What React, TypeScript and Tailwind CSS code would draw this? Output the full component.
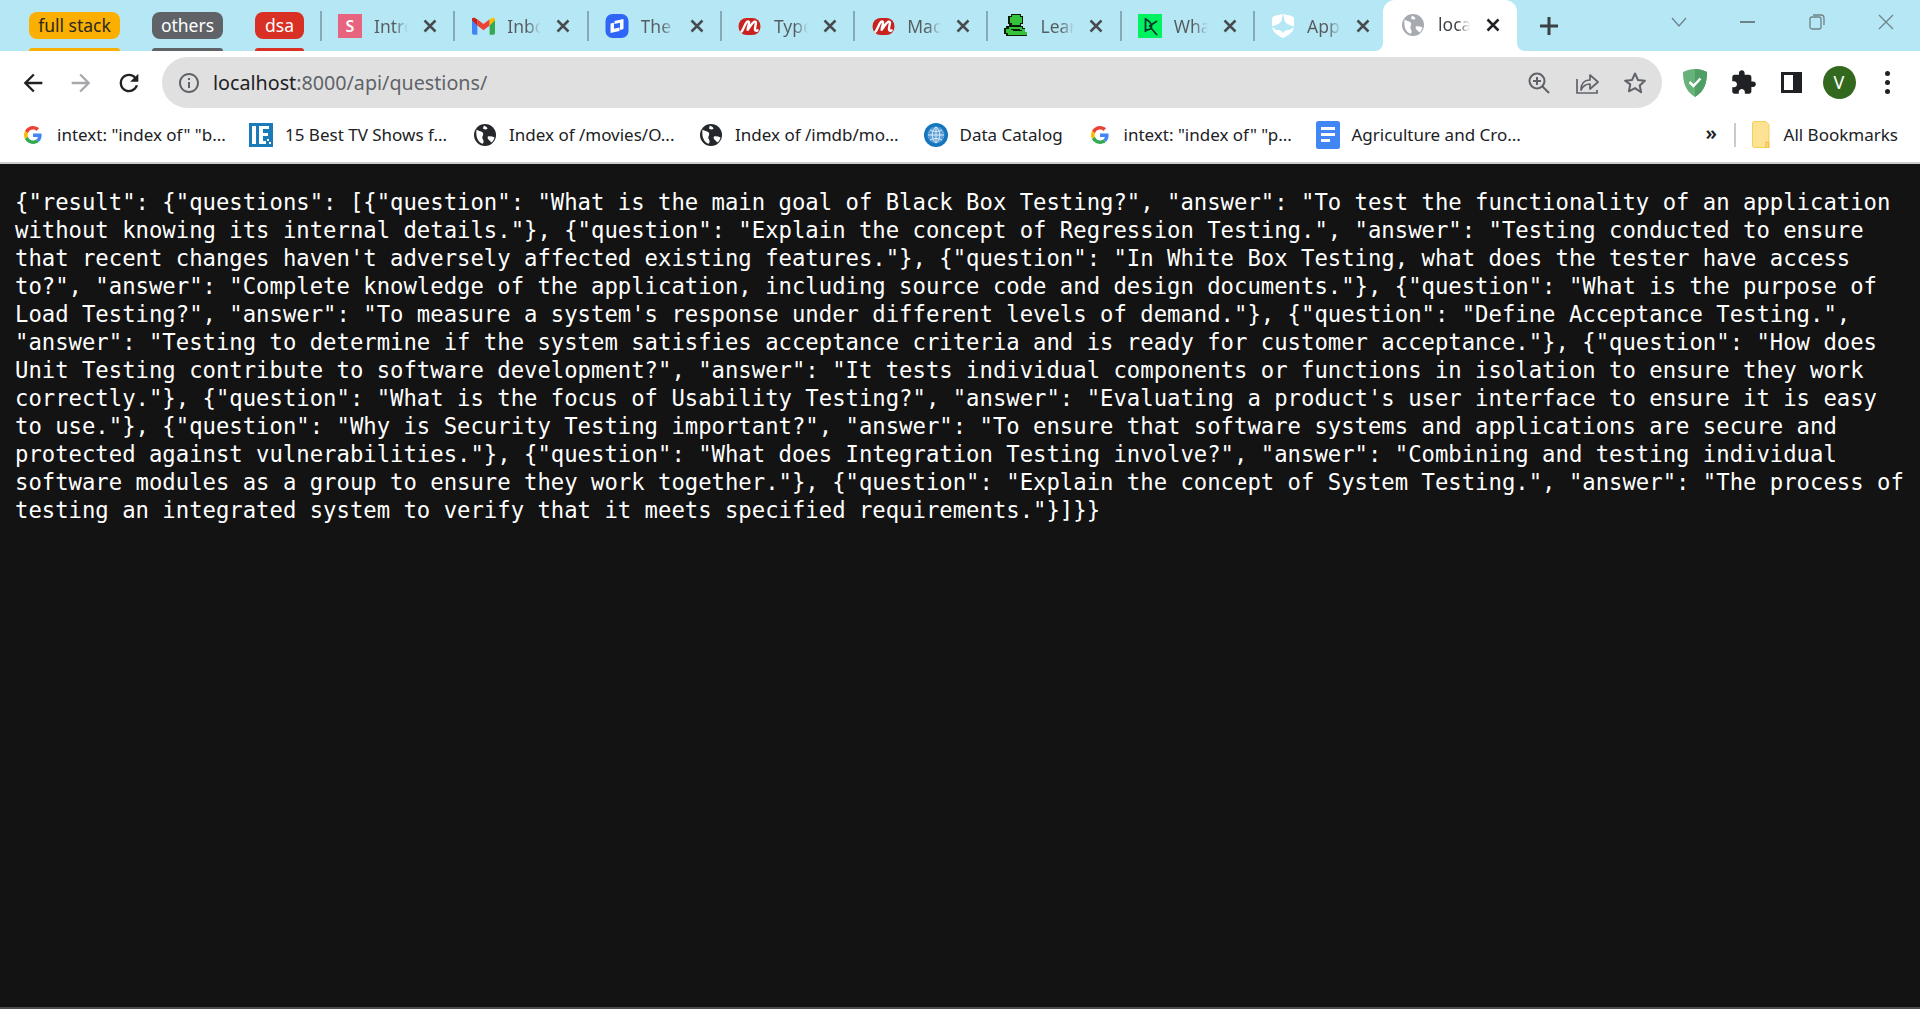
import React from 'react';

const UI_FONT = "font-['Noto_Sans',sans-serif]";

const GoogleIcon = () => (
  <svg viewBox="0 0 48 48" className="w-[18px] h-[18px]">
    <path fill="#EA4335" d="M24 9.5c3.54 0 6.71 1.22 9.21 3.6l6.85-6.85C35.9 2.38 30.47 0 24 0 14.62 0 6.51 5.38 2.56 13.22l7.98 6.19C12.43 13.72 17.74 9.5 24 9.5z" />
    <path fill="#4285F4" d="M46.98 24.55c0-1.57-.15-3.09-.38-4.55H24v9.02h12.94c-.58 2.96-2.26 5.48-4.78 7.18l7.73 6c4.51-4.18 7.09-10.36 7.09-17.65z" />
    <path fill="#FBBC05" d="M10.53 28.59c-.48-1.45-.76-2.99-.76-4.59s.27-3.14.76-4.59l-7.98-6.19C.92 16.46 0 20.12 0 24c0 3.88.92 7.54 2.56 10.78l7.97-6.19z" />
    <path fill="#34A853" d="M24 48c6.48 0 11.93-2.13 15.89-5.81l-7.73-6c-2.15 1.45-4.92 2.3-8.16 2.3-6.26 0-11.57-4.22-13.47-9.91l-7.98 6.19C6.51 42.62 14.62 48 24 48z" />
  </svg>
);

const GmailIcon = () => (
  <svg viewBox="0 0 24 18" className="w-[23px] h-[18px]">
    <path fill="#4285F4" d="M0 3v13.2C0 17.2.8 18 1.8 18h3.8V8.6L2.5 2 0 3z" />
    <path fill="#34A853" d="M18.4 18h3.8c1 0 1.8-.8 1.8-1.8V3l-2.500-1-3.100 6.600V18z" />
    <path fill="#EA4335" d="M5.600 8.600 2.900.7C1.600-.3 0 .6 0 2.200V3l5.600 5.600zM5.600 8.600 12 13.400l6.400-4.800V2L12 6.800 5.600 2v6.600z" />
    <path fill="#FBBC04" d="M18.400 2v6.600L24 3v-.8c0-1.600-1.600-2.500-2.900-1.500L18.400 2z" />
    <path fill="#C5221F" d="M0 3l5.600 5.600V2L2.900.7C1.600-.3 0 .6 0 2.200V3z" />
  </svg>
);

const BlueLogo = () => (
  <svg viewBox="0 0 24 24" className="w-[24px] h-[24px]">
    <rect x="0.500" y="0" width="23" height="24" rx="7" fill="#2f66f6" />
    <path fill="#fff" d="M9.500 7 18.500 5v10l-3.500 1V8.800l-5.500 1.200z" />
    <path fill="#fff" d="M5.500 9.500 9 8.700v6.100l5.500-1.200V17l-9 2z" />
  </svg>
);

const ScriptMIcon = () => (
  <svg viewBox="0 0 24 20" className="w-[23px] h-[19px]">
    <rect x="0.500" y="1" width="23" height="18" rx="8.500" fill="#c9221f" />
    <path fill="none" stroke="#fff" strokeWidth="2.500" strokeLinecap="round" strokeLinejoin="round" d="M3.500 15.500C6 13 7 7 9.500 5c1.500-1 2.300 0 2 1.800-.4 2.400-1.500 5-1.500 6.700 2.500-2.500 4-7 7-8.500 1.500-.5 2 .5 1.700 2-.4 2-1.200 4.500-.9 6.500.2 1 1.200 1.200 2.700.5" />
  </svg>
);

// little pixel art character, black outline with a green fill
const GreenGuy = () => (
  <svg viewBox="0 0 24 24" className="w-[24px] h-[24px]" shapeRendering="crispEdges">
    <path fill="#0b1a0b" d="M7 0h10v2h2v8h-2v2h2v2h2v4h2v4H2v-2H0v-6h2v-2h3v-2H4V2h3z" />
    <path fill="#33c23a" d="M8 1h8v2h2v6h-2v2H8V9H6V3h2z" />
    <path fill="#33c23a" d="M5 13h13v2h3v3h2v3H4v-2H2v-4h3z" />
    <path fill="#0b1a0b" d="M7 15h9v1h2v1H9v-1H7zM5 5h1v3H5zM18 5h1v3h-1z" />
  </svg>
);

const DkIcon = () => (
  <svg viewBox="0 0 24 24" className="w-[24px] h-[24px]">
    <rect width="24" height="24" fill="#00f260" />
    <path fill="none" stroke="#07362c" strokeWidth="1.800" d="M7.500 4v14M7.500 5c4 2 6 4.500 6 7.500 0 2.500-3 3.500-6 3.500M11 12.500 19 7M13 14l6 7" />
  </svg>
);

const ShieldIcon = () => (
  <svg viewBox="0 0 24 24" className="w-[24px] h-[24px]">
    <path fill="#fff" d="M12 0 3 2 1 4v8c0 5 5 9.500 11 12 6-2.500 11-7 11-12V4l-2-2z" />
    <path fill="#b5e8f4" d="M12-1l1.500 7.500C14.500 9 17 11 24 12.500l-5.500 3.500c-3 0-5 .5-6.500 3-1.500-2.500-3.500-3-6.500-3L0 12.500C7 11 9.500 9 10.500 6.500z" />
  </svg>
);

const GlobeIcon = ({ dark = true }: { dark?: boolean }) => (
  <svg viewBox="0 0 22 22" className="w-[22px] h-[22px]">
    <circle cx="11" cy="11" r="11" fill={dark ? '#24272b' : '#a6abb1'} />
    <path fill="#fff" d="M2.500 5.500C5 7.500 8 7 9 9c1 2.500-2 4 0 6.500.8 1 .8 3-.2 4.300C4.500 18.500 1.500 14 2.500 5.500z" />
    <path fill="#fff" d="M14 12.500c2-.5 4.500 0 6.500 1-.5 2-1.500 3.700-3 5-1.200-1-2.500-2.500-3.500-3.500-.5-.8-.5-1.800 0-2.500z" />
    <path fill="#fff" d="M10 1.500c1.500 1 3 1.500 3.500 3-1 1.500-3 1-4.500 0 .2-1 .5-2 1-3z" />
  </svg>
);

const IeIcon = () => (
  <svg viewBox="0 0 24 24" className="w-[24px] h-[24px]" shapeRendering="crispEdges">
    <rect width="24" height="24" fill="#1b7bb9" />
    <path fill="#fff" d="M3 3h4v18H3zM10 3h10v3h-6v4h5v3h-5v5h3v3h-7z" />
    <path fill="#fff" d="M18 16h2v2h-2zM20 19h2v2h-2z" />
  </svg>
);

const CatalogIcon = () => (
  <svg viewBox="0 0 24 24" className="w-[24px] h-[24px]">
    <circle cx="12" cy="12" r="12" fill="#1476bd" />
    <circle cx="12" cy="12" r="8.500" fill="#5b9fd4" />
    <path fill="none" stroke="#e8f2fa" strokeWidth="0.900" d="M12 4v16M4 12h16M6 7c4 2 8 2 12 0M6 17c4-2 8-2 12 0M12 4c-5 4-5 12 0 16M12 4c5 4 5 12 0 16" />
  </svg>
);

const DocIcon = () => (
  <svg viewBox="0 0 24 28" className="w-[24px] h-[28px]">
    <rect width="24" height="28" rx="2.500" fill="#4285f4" />
    <path fill="#fff" d="M5 6h14v3H5zM5 12h14v3H5zM5 18h9v3H5z" />
  </svg>
);

const FolderIcon = () => (
  <svg viewBox="0 0 18 28" className="w-[18px] h-[28px]">
    <path fill="#fde293" stroke="#f6cf5b" strokeWidth="1" d="M2 .5h12l3 3v23H2c-.8 0-1.500-.7-1.500-1.500V2C.5 1.200 1.200.5 2 .5z" />
    <path fill="none" stroke="#f2c14e" strokeWidth="1.500" d="M14 27v-5c0-1 2.500-1 2.500 0v5" />
  </svg>
);

const CloseIcon = ({ className }: { className: string }) => (
  <svg viewBox="0 0 14 14" className={`w-[14px] h-[14px] ${className}`}>
    <path d="M1.500 1.500 12.500 12.500M12.500 1.500 1.500 12.500" stroke="currentColor" strokeWidth="2.500" fill="none" />
  </svg>
);

const MaterialIcon = ({ d, className }: { d: string; className: string }) => (
  <svg viewBox="0 0 24 24" className={className} fill="currentColor">
    <path d={d} />
  </svg>
);

const tabGroups = [
  { label: 'full stack', pill: 'bg-[#fbaf00] text-[#2a2a20]', bar: 'bg-[#fbaf00]', width: 'w-[91px]' },
  { label: 'others', pill: 'bg-[#5f6368] text-white', bar: 'bg-[#5f6368]', width: 'w-[71px]' },
  { label: 'dsa', pill: 'bg-[#d93025] text-white', bar: 'bg-[#d93025]', width: 'w-[49px]' },
];

const tabs = [
  { title: 'Intro', icon: <div className="w-[24px] h-[24px] bg-[#e8637e] text-white text-[16px] font-semibold flex items-center justify-center">S</div> },
  { title: 'Inbox', icon: <GmailIcon /> },
  { title: 'The', icon: <BlueLogo /> },
  { title: 'Type', icon: <ScriptMIcon /> },
  { title: 'Mac', icon: <ScriptMIcon /> },
  { title: 'Learn', icon: <GreenGuy /> },
  { title: 'What', icon: <DkIcon /> },
  { title: 'App', icon: <ShieldIcon /> },
];

const bookmarks = [
  { label: 'intext: "index of" "b...', icon: <GoogleIcon />, width: 'w-[167px]' },
  { label: '15 Best TV Shows f...', icon: <IeIcon />, width: 'w-[163px]' },
  { label: 'Index of /movies/O...', icon: <GlobeIcon />, width: 'w-[165px]' },
  { label: 'Index of /imdb/mo...', icon: <GlobeIcon />, width: 'w-[163.500px]' },
  { label: 'Data Catalog', icon: <CatalogIcon />, width: 'w-[103px]' },
  { label: 'intext: "index of" "p...', icon: <GoogleIcon />, width: 'w-[167px]' },
  { label: 'Agriculture and Cro...', icon: <DocIcon />, width: 'w-[169px]' },
];

const RESPONSE = `{"result": {"questions": [{"question": "What is the main goal of Black Box Testing?", "answer": "To test the functionality of an application without knowing its internal details."}, {"question": "Explain the concept of Regression Testing.", "answer": "Testing conducted to ensure that recent changes haven't adversely affected existing features."}, {"question": "In White Box Testing, what does the tester have access to?", "answer": "Complete knowledge of the application, including source code and design documents."}, {"question": "What is the purpose of Load Testing?", "answer": "To measure a system's response under different levels of demand."}, {"question": "Define Acceptance Testing.", "answer": "Testing to determine if the system satisfies acceptance criteria and is ready for customer acceptance."}, {"question": "How does Unit Testing contribute to software development?", "answer": "It tests individual components or functions in isolation to ensure they work correctly."}, {"question": "What is the focus of Usability Testing?", "answer": "Evaluating a product's user interface to ensure it is easy to use."}, {"question": "Why is Security Testing important?", "answer": "To ensure that software systems and applications are secure and protected against vulnerabilities."}, {"question": "What does Integration Testing involve?", "answer": "Combining and testing individual software modules as a group to ensure they work together."}, {"question": "Explain the concept of System Testing.", "answer": "The process of testing an integrated system to verify that it meets specified requirements."}]}}`;

export default function App() {
  return (
    <div className={`h-screen flex flex-col overflow-hidden bg-[#131313] ${UI_FONT}`}>
      {/* Tab strip */}
      <div className="h-[51px] shrink-0 bg-[#b5e8f4] flex pl-[29px]">
        <div className="flex gap-[32px] pt-[12px]">
          {tabGroups.map((g) => (
            <div key={g.label} className={`${g.width} flex flex-col justify-between`}>
              <div className={`h-[27px] rounded-[8px] flex items-center justify-center text-[17.500px] ${g.pill}`}>{g.label}</div>
              <div className={`h-[3px] rounded-t-[3px] ${g.bar}`} />
            </div>
          ))}
        </div>

        <div className="flex ml-[16px] pt-[11px]">
          {tabs.map((t, i) => (
            <div key={t.title} className={`h-[30px] flex items-center ${i === 7 ? 'w-[130px]' : 'w-[133.300px]'}`}>
              <div className="w-[2px] h-full bg-[#86a9b3]" />
              <div className="w-[24px] h-[24px] ml-[16px] flex items-center justify-center shrink-0">{t.icon}</div>
              <div className="w-[34px] ml-[12px] overflow-hidden whitespace-nowrap text-[17.500px] bg-linear-to-r from-[#565b60] from-60% to-transparent bg-clip-text text-transparent">
                {t.title}
              </div>
              <CloseIcon className="ml-[15px] text-[#484c50]" />
            </div>
          ))}
        </div>

        {/* Active tab */}
        <div className="relative w-[134px] h-full bg-white rounded-t-[12px] flex items-center pb-[2px]">
          <div className="absolute left-[-8px] bottom-0 w-[8px] h-[8px] bg-white">
            <div className="w-full h-full bg-[#b5e8f4] rounded-br-[8px]" />
          </div>
          <div className="absolute right-[-8px] bottom-0 w-[8px] h-[8px] bg-white">
            <div className="w-full h-full bg-[#b5e8f4] rounded-bl-[8px]" />
          </div>
          <div className="ml-[19px]">
            <GlobeIcon dark={false} />
          </div>
          <div className="w-[32px] ml-[14px] overflow-hidden whitespace-nowrap text-[17.500px] bg-linear-to-r from-[#3c4043] from-60% to-transparent bg-clip-text text-transparent">
            localhost
          </div>
          <CloseIcon className="ml-[16px] text-[#202124]" />
        </div>

        <div className="ml-[22px] pt-[16px]">
          <svg viewBox="0 0 20 20" className="w-[20px] h-[20px] text-[#3c4043]">
            <path d="M10 1v18M1 10h18" stroke="currentColor" strokeWidth="3" />
          </svg>
        </div>

        {/* Window controls */}
        <div className="ml-auto flex h-[44px] text-[#6f8288]">
          <div className="w-[69px] flex items-center justify-center">
            <svg viewBox="0 0 16 10" className="w-[16px] h-[10px]">
              <path d="M1 1l7 8 7-8" fill="none" stroke="currentColor" strokeWidth="1.300" />
            </svg>
          </div>
          <div className="w-[69px] flex items-center justify-center">
            <div className="w-[15px] h-[2px] bg-[#6f8288]" />
          </div>
          <div className="w-[69px] flex items-center justify-center">
            <svg viewBox="0 0 16 16" className="w-[16px] h-[16px]">
              <rect x="1" y="3" width="11" height="12" rx="2" fill="none" stroke="currentColor" strokeWidth="1.300" />
              <path d="M4 1h8c1.700 0 3 1.300 3 3v7" fill="none" stroke="currentColor" strokeWidth="1.300" />
            </svg>
          </div>
          <div className="w-[69px] flex items-center justify-center">
            <svg viewBox="0 0 16 16" className="w-[16px] h-[16px]">
              <path d="M1 1l14 14M15 1L1 15" fill="none" stroke="currentColor" strokeWidth="1.300" />
            </svg>
          </div>
        </div>
      </div>

      {/* Toolbar */}
      <div className="h-[61px] shrink-0 bg-white flex items-start pt-[6px] pl-[9px]">
        <div className="flex h-[51px] items-center">
          <div className="w-[48px] flex justify-center text-[#202124]">
            <MaterialIcon className="w-[28px] h-[28px]" d="M20 11H7.830l5.590-5.590L12 4l-8 8 8 8 1.410-1.410L7.830 13H20v-2z" />
          </div>
          <div className="w-[48px] flex justify-center text-[#a6a8ab]">
            <MaterialIcon className="w-[28px] h-[28px]" d="M12 4l-1.410 1.410L16.170 11H4v2h12.170l-5.580 5.590L12 20l8-8z" />
          </div>
          <div className="w-[48px] flex justify-center text-[#202124]">
            <MaterialIcon className="w-[28px] h-[28px]" d="M17.650 6.350C16.200 4.900 14.210 4 12 4c-4.420 0-7.990 3.580-7.990 8s3.570 8 7.990 8c3.730 0 6.840-2.550 7.730-6h-2.080c-.820 2.330-3.040 4-5.650 4-3.310 0-6-2.690-6-6s2.690-6 6-6c1.660 0 3.140.690 4.220 1.780L13 11h7V4l-2.350 2.350z" />
          </div>
        </div>

        <div className="w-[1500px] h-[51px] ml-[9px] rounded-full bg-[#e0e0e0] flex items-center pl-[15px] pr-[3px]">
          <MaterialIcon className="w-[24px] h-[24px] text-[#5f6368] shrink-0" d="M11 7h2v2h-2zm0 4h2v6h-2zm1-9C6.480 2 2 6.480 2 12s4.480 10 10 10 10-4.480 10-10S17.520 2 12 2zm0 18c-4.410 0-8-3.590-8-8s3.590-8 8-8 8 3.590 8 8-3.590 8-8 8z" />
          <div className="ml-[12px] text-[19.700px] whitespace-nowrap text-[#5f6368]">
            <span className="text-[#202124]">localhost</span>:8000/api/questions/
          </div>
          <div className="ml-auto flex items-center text-[#5f6368]">
            <div className="w-[48px] flex justify-center">
              <svg viewBox="0 0 24 24" className="w-[24px] h-[24px]" fill="none" stroke="currentColor" strokeWidth="2">
                <circle cx="10" cy="10" r="7.500" />
                <path d="M15.500 15.500 22 22M10 6v8M6 10h8" />
              </svg>
            </div>
            <div className="w-[48px] flex justify-center">
              <svg viewBox="0 0 24 24" className="w-[24px] h-[24px]" fill="none" stroke="currentColor" strokeWidth="1.700">
                <path d="M2 8v14h20v-3" />
                <path d="M6 19c0-6 3-10 9-10V4l8 7-8 7v-5c-4 0-7 2-9 6z" strokeLinejoin="round" />
              </svg>
            </div>
            <div className="w-[48px] flex justify-center">
              <svg viewBox="0 0 24 24" className="w-[24px] h-[24px]" fill="none" stroke="currentColor" strokeWidth="2" strokeLinejoin="round">
                <path d="M12 2.500l2.900 6.400 7 .8-5.200 4.700 1.400 6.900L12 17.100l-6.100 3.200 1.400-6.900L2.100 9.700l7-.8z" />
              </svg>
            </div>
          </div>
        </div>

        <div className="flex h-[51px] items-center ml-[9px]">
          <div className="w-[48px] flex justify-center">
            <svg viewBox="0 0 24 28" className="w-[24px] h-[28px]">
              <path fill="#67b279" d="M12 0C8 0 4 1 0 3c0 10 2 19 12 25 10-6 12-15 12-25-4-2-8-3-12-3z" />
              <path fill="#4f9e66" d="M12 0c4 0 8 1 12 3 0 10-2 19-12 25z" />
              <path fill="none" stroke="#fff" strokeWidth="2.500" d="M6.500 13l4 4 7-7.500" />
            </svg>
          </div>
          <div className="w-[48px] flex justify-center text-[#202124]">
            <MaterialIcon className="w-[27px] h-[27px]" d="M20.500 11H19V7c0-1.100-.900-2-2-2h-4V3.500C13 2.120 11.880 1 10.500 1S8 2.120 8 3.500V5H4c-1.100 0-1.990.900-1.990 2v3.800H3.500c1.490 0 2.700 1.210 2.700 2.700s-1.210 2.700-2.700 2.700H2V20c0 1.100.900 2 2 2h3.800v-1.500c0-1.490 1.210-2.700 2.700-2.700 1.490 0 2.700 1.210 2.700 2.700V22H17c1.100 0 2-.900 2-2v-4h1.500c1.380 0 2.500-1.120 2.500-2.500S21.880 11 20.500 11z" />
          </div>
          <div className="w-[48px] flex justify-center">
            <div className="w-[21px] h-[21px] border-[3px] border-[#202124] border-r-[9px]" />
          </div>
          <div className="w-[48px] flex justify-center">
            <div className="w-[33px] h-[33px] rounded-full bg-[#33691e] text-white text-[18px] flex items-center justify-center">V</div>
          </div>
          <div className="w-[48px] flex flex-col items-center gap-[4px]">
            <div className="w-[5px] h-[5px] rounded-full bg-[#202124]" />
            <div className="w-[5px] h-[5px] rounded-full bg-[#202124]" />
            <div className="w-[5px] h-[5px] rounded-full bg-[#202124]" />
          </div>
        </div>
      </div>

      {/* Bookmarks bar */}
      <div className="h-[52px] shrink-0 bg-white border-b-2 border-[#cccccc] flex items-center pl-[21px] pb-[4px] text-[17px] text-[#202124]">
        {bookmarks.map((b, i) => (
          <div key={i} className="flex items-center mr-[25px]">
            <div className="w-[24px] flex justify-center">{b.icon}</div>
            <div className={`ml-[12px] whitespace-nowrap ${b.width}`}>{b.label}</div>
          </div>
        ))}
        <div className="ml-auto w-[16px] text-[20px] font-semibold leading-none pb-[4px]">»</div>
        <div className="w-[2px] h-[24px] bg-[#c8cacc] ml-[12px]" />
        <div className="ml-[16px]">
          <FolderIcon />
        </div>
        <div className="ml-[14px] mr-[22px] whitespace-nowrap">All Bookmarks</div>
      </div>

      {/* Response body */}
      <pre className="flex-1 min-h-0 pl-[15px] pr-[6px] pt-[24px] text-white text-[22.250px] leading-[28px] font-['DejaVu_Sans_Mono',monospace] whitespace-pre-wrap break-words">
        {RESPONSE}
      </pre>
      <div className="h-[2px] shrink-0 bg-[#4a4d52]" />
    </div>
  );
}
